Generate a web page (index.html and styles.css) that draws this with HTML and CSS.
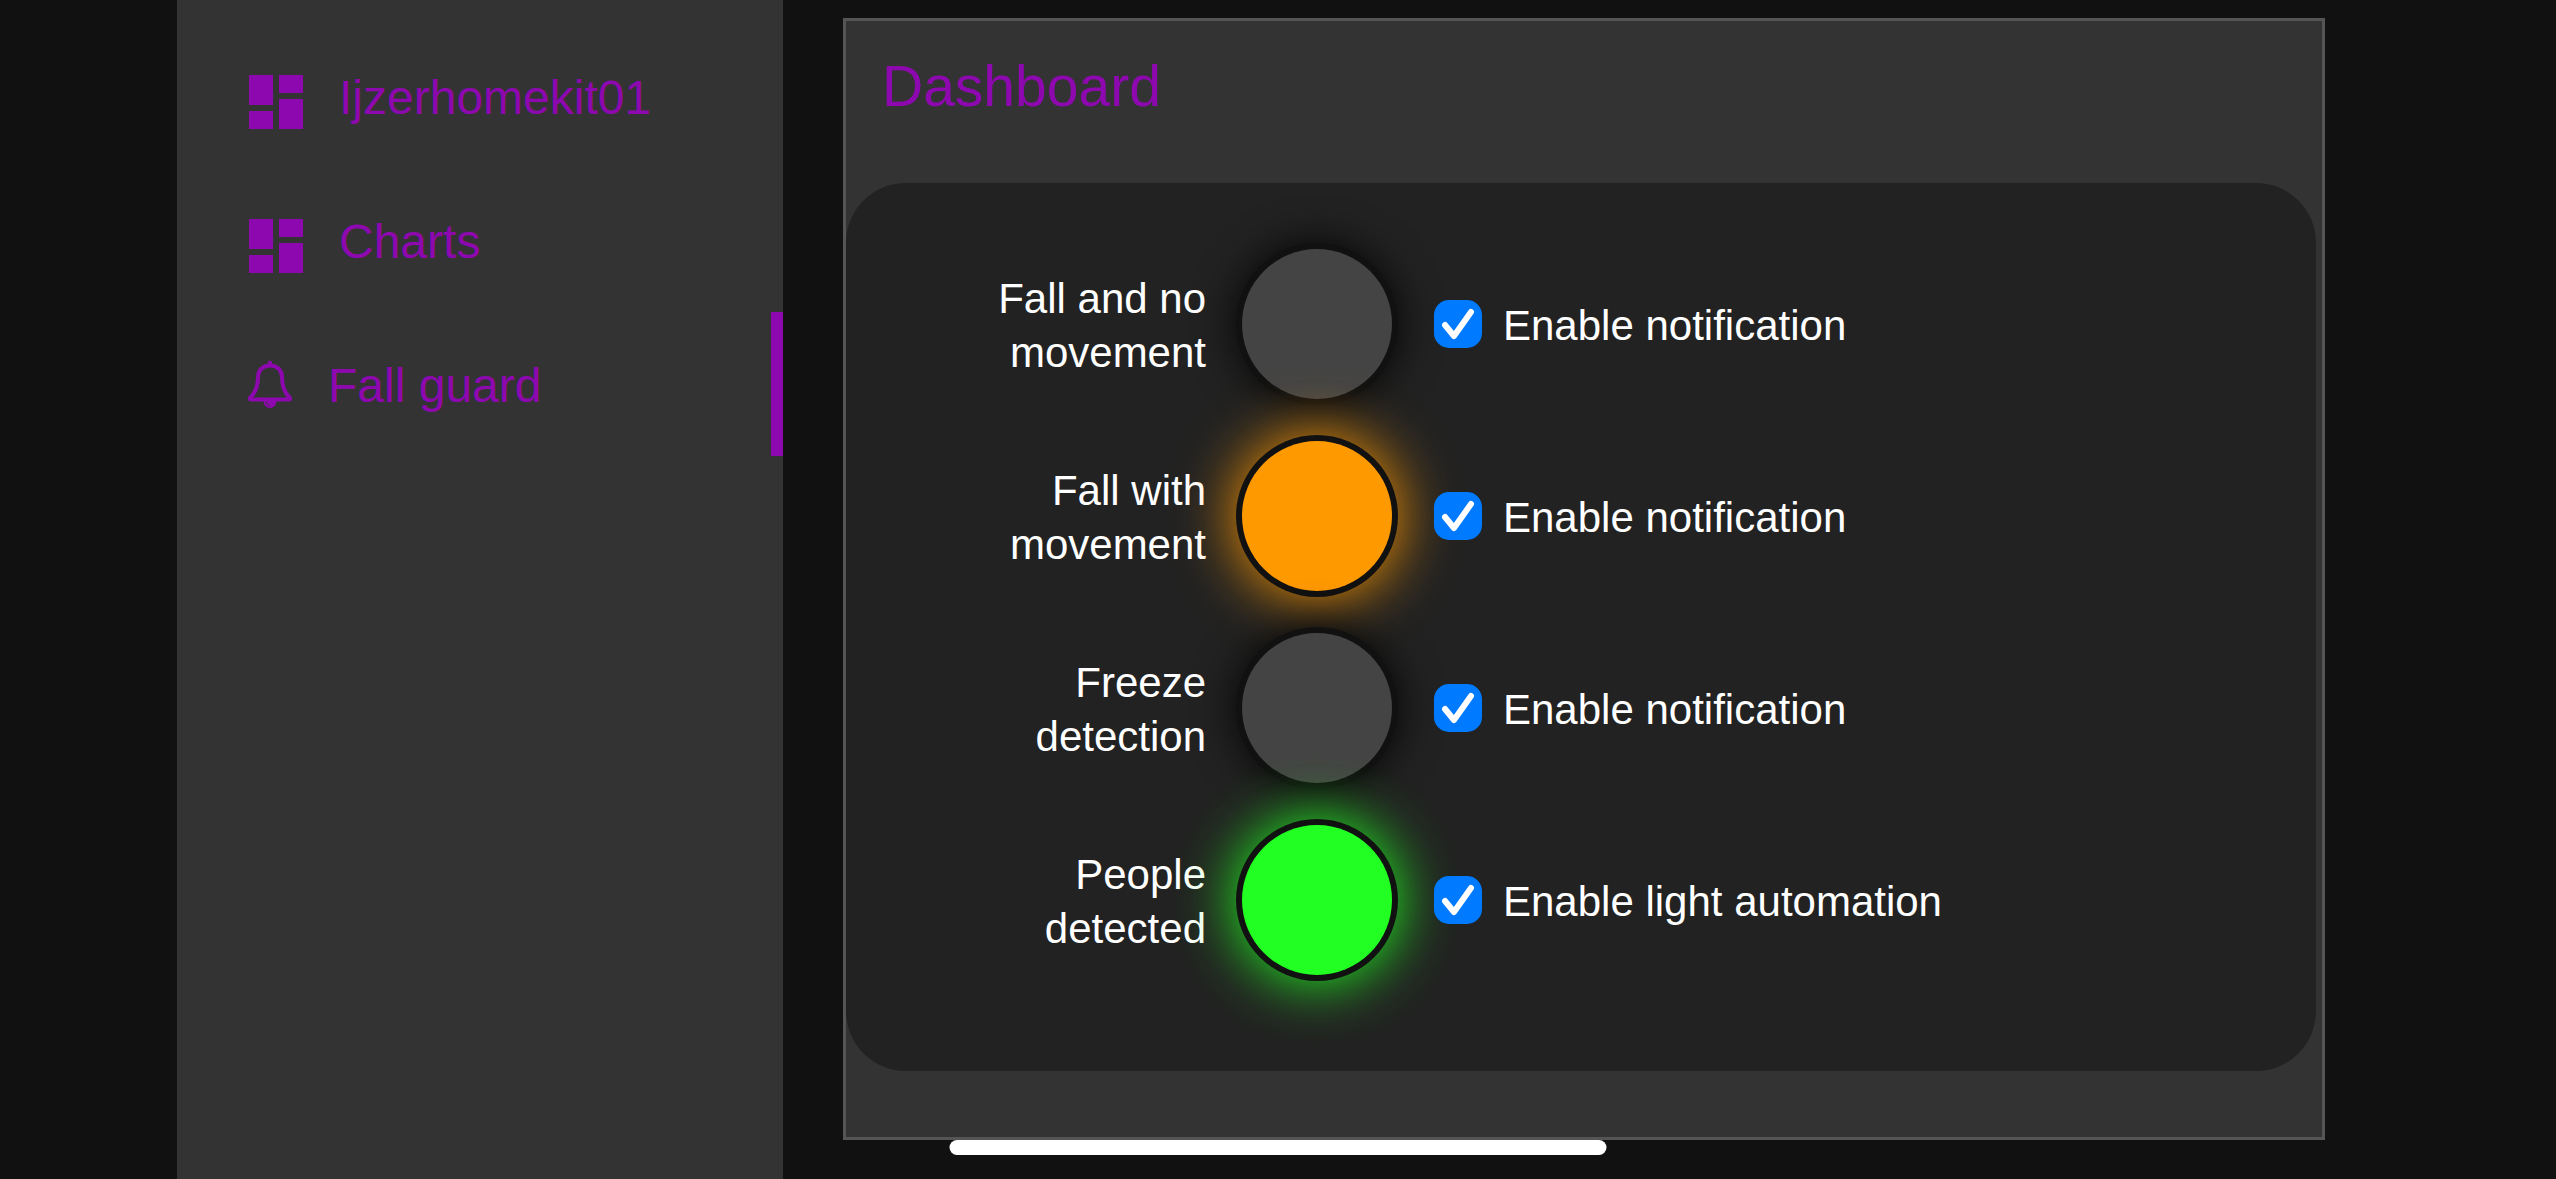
FILE: index.html
```html
<!DOCTYPE html>
<html lang="en">
<head>
  <meta charset="UTF-8" />
  <meta name="viewport" content="width=device-width, initial-scale=1.0"/>
  <title>Fall guard</title>
  <link rel="stylesheet" href="styles.css">
</head>
<body>
  <nav class="sidebar">
    <a href="#home" class="nav-item">
      <svg class="nav-icon" viewBox="0 0 24 24"><path d="M3 13h8V3H3v10zm0 8h8v-6H3v6zm10 0h8V11h-8v10zm0-18v6h8V3h-8z"/></svg>
      <span>Ijzerhomekit01</span>
    </a>
    <a href="#charts" class="nav-item">
      <svg class="nav-icon" viewBox="0 0 24 24"><path d="M3 13h8V3H3v10zm0 8h8v-6H3v6zm10 0h8V11h-8v10zm0-18v6h8V3h-8z"/></svg>
      <span>Charts</span>
    </a>
    <a href="#fallguard" class="nav-item active">
      <svg class="bell-icon" viewBox="0 0 44 48">
        <path class="bell-body" d="M22 5.500C14.500 5.500 10 10.500 10 17C10 26 8 32 2.500 37.500Q1 39.500 3 39.500H41Q43 39.500 41.500 37.500C36 32 34 26 34 17C34 10.500 29.500 5.500 22 5.500Z"/>
        <path d="M20 5V2.500a2 2 0 0 1 4 0V5zM15.500 41h13a6.500 7 0 0 1-13 0z"/>
        <path class="bell-shine" d="M18 41.500q.5 3 3.500 4"/>
      </svg>
      <span>Fall guard</span>
    </a>
  </nav>

  <main class="content">
    <h1>Dashboard</h1>

    <div class="card">
      <div class="row">
        <div class="row-label">Fall and no movement</div>
        <div class="lamp"></div>
        <label class="option">
          <span class="check">
            <input type="checkbox" id="notify-fall" checked />
            <svg viewBox="0 0 48 48"><path d="M11 25l9 11L37 12"/></svg>
          </span>
          <span class="option-text">Enable notification</span>
        </label>
      </div>

      <div class="row">
        <div class="row-label">Fall with movement</div>
        <div class="lamp orange"></div>
        <label class="option">
          <span class="check">
            <input type="checkbox" id="notify-movement" checked />
            <svg viewBox="0 0 48 48"><path d="M11 25l9 11L37 12"/></svg>
          </span>
          <span class="option-text">Enable notification</span>
        </label>
      </div>

      <div class="row">
        <div class="row-label">Freeze detection</div>
        <div class="lamp"></div>
        <label class="option">
          <span class="check">
            <input type="checkbox" id="notify-freeze" checked />
            <svg viewBox="0 0 48 48"><path d="M11 25l9 11L37 12"/></svg>
          </span>
          <span class="option-text">Enable notification</span>
        </label>
      </div>

      <div class="row">
        <div class="row-label">People detected</div>
        <div class="lamp green"></div>
        <label class="option">
          <span class="check">
            <input type="checkbox" id="light-automation" checked />
            <svg viewBox="0 0 48 48"><path d="M11 25l9 11L37 12"/></svg>
          </span>
          <span class="option-text">Enable light automation</span>
        </label>
      </div>
    </div>
  </main>

  <div class="home-indicator"></div>
</body>
</html>
```
FILE: styles.css
```css
* { box-sizing: border-box; }

body {
  font-family: Helvetica, "Liberation Sans", Arial, sans-serif;
  font-size: 42px;
  font-kerning: none;
  margin: 0;
  padding: 0 177px;
  min-height: 100vh;
  display: flex;
  background-color: #111;
  color: #fff;
}

/* Sidebar */
.sidebar {
  flex: none;
  width: 606px;
  padding-top: 24px;
  background-color: #333;
}

.nav-item {
  display: flex;
  align-items: center;
  gap: 27px;
  height: 144px;
  padding-left: 63px;
  border-right: 12px solid transparent;
  color: #8e08b0;
  font-size: 48px;
  line-height: 54px;
  text-decoration: none;
}

.nav-item.active {
  gap: 36px;
  padding-left: 71px;
  border-right-color: #8e08b0;
}

.nav-item span {
  padding-top: 4px;
}

.nav-icon {
  width: 72px;
  height: 72px;
  margin-top: 12px;
  fill: currentColor;
}

.bell-icon {
  width: 44px;
  height: 48px;
  fill: currentColor;
}

.bell-body {
  fill: none;
  stroke: currentColor;
  stroke-width: 4;
}

.bell-shine {
  fill: none;
  stroke: #333;
  stroke-width: 1;
}

/* Content */
.content {
  flex: 1;
  margin: 18px 54px 39px 60px;
  background-color: #333;
  border: 3px solid #555;
}

h1 {
  margin: 0;
  padding: 32px 36px 64px;
  color: #8e08b0;
  font-size: 57px;
  font-weight: normal;
  line-height: 66px;
}

.card {
  display: flex;
  flex-direction: column;
  margin-right: 6px;
  padding: 45px 0 75px 120px;
  background-color: #222;
  border-radius: 60px;
}

.row {
  display: flex;
  align-items: center;
  height: 192px;
}

.row-label {
  width: 240px;
  margin-right: 36px;
  padding-top: 3px;
  line-height: 54px;
  text-align: right;
}

.lamp {
  width: 150px;
  height: 150px;
  margin-right: 42px;
  border-radius: 50%;
  background-color: #444;
  box-shadow: 0 0 0 6px #111, 0 0 45px 3px #000;
}

.lamp.orange {
  background-color: #ff9900;
  box-shadow: 0 0 0 6px #111, 0 0 60px 6px #ff9900;
}

.lamp.green {
  background-color: #22ff22;
  box-shadow: 0 0 0 6px #111, 0 0 60px 6px #22ff22;
}

.option {
  display: flex;
  align-items: center;
  gap: 21px;
  line-height: 54px;
}

.option-text {
  padding-top: 3px;
}

/* tick is stacked on the box */
.check {
  display: grid;
  width: 48px;
  height: 48px;
}

.check input,
.check svg {
  grid-area: 1 / 1;
  width: 48px;
  height: 48px;
  margin: 0;
}

.check input {
  appearance: none;
  border-radius: 15px;
  background-color: #444;
}

.check input:checked {
  background-color: #007aff;
}

.check svg {
  visibility: hidden;
  pointer-events: none;
  fill: none;
  stroke: #fff;
  stroke-width: 6;
  stroke-linecap: round;
  stroke-linejoin: round;
}

.check input:checked + svg {
  visibility: visible;
}

.home-indicator {
  position: fixed;
  bottom: 24px;
  left: 50%;
  width: 657px;
  height: 15px;
  transform: translateX(-50%);
  border-radius: 8px;
  background-color: #fff;
}
```
